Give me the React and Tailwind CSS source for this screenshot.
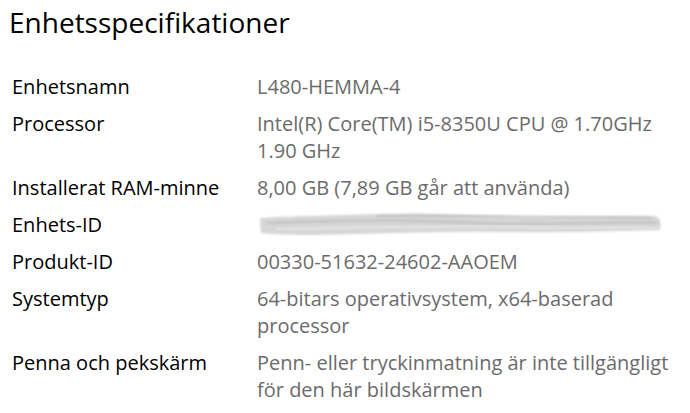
const SPECS = [
  { label: 'Enhetsnamn', lines: ['L480-HEMMA-4'] },
  { label: 'Processor', lines: ['Intel(R) Core(TM) i5-8350U CPU @ 1.70GHz', '1.90 GHz'] },
  { label: 'Installerat RAM-minne', lines: ['8,00 GB (7,89 GB går att använda)'] },
  { label: 'Enhets-ID', redacted: true },
  { label: 'Produkt-ID', lines: ['00330-51632-24602-AAOEM'] },
  { label: 'Systemtyp', lines: ['64-bitars operativsystem, x64-baserad', 'processor'] },
  { label: 'Penna och pekskärm', lines: ['Penn- eller tryckinmatning är inte tillgängligt', 'för den här bildskärmen'] },
];

// Smudged-out value, the way the screenshot hides the device id
function Redacted() {
  return (
    <svg width="410" height="27" viewBox="0 0 410 27" className="block">
      <defs>
        <filter id="smudge" x="-5%" y="-50%" width="110%" height="200%">
          <feGaussianBlur stdDeviation="1.2" />
        </filter>
      </defs>
      <path
        d="M3 7 C40 5 80 4 120 3 C170 1 220 5 280 6 C330 6 370 4 398 5 C404 6 404 14 403 19 C360 20 300 22 240 21 C180 20 120 23 60 24 C30 24 10 23 4 22 Z"
        fill="#d6d6d6"
        filter="url(#smudge)"
      />
      <path
        d="M10 12 C80 9 150 8 220 12 C290 15 350 10 400 12"
        stroke="#c4c4c4"
        strokeWidth="2.5"
        fill="none"
        filter="url(#smudge)"
      />
      <path
        d="M20 18 C90 17 170 15 250 16 C320 17 370 16 400 17"
        stroke="#e6e6e6"
        strokeWidth="2"
        fill="none"
        filter="url(#smudge)"
      />
      <path
        d="M120 5 C200 4 300 6 395 7"
        stroke="#bdbdbd"
        strokeWidth="1.5"
        fill="none"
        filter="url(#smudge)"
      />
    </svg>
  );
}

export default function App() {
  return (
    <div
      className="w-[690px] h-[413px] bg-white overflow-hidden"
      style={{ fontFamily: '"Open Sans", "Noto Sans", sans-serif' }}
    >
      <h1 className="pl-[9px] pt-[3px] text-[28px] leading-[38px] text-black">
        Enhetsspecifikationer
      </h1>

      <div className="grid grid-cols-[245px_1fr] gap-y-[10px] pl-[12px] mt-[32px]">
        {SPECS.map((row) => (
          <div key={row.label} className="contents">
            <div className="text-[20px] leading-[27px] text-black whitespace-nowrap">{row.label}</div>
            <div className="text-[20px] leading-[27px] text-[#6b6b6b]">
              {row.redacted ? (
                <Redacted />
              ) : (
                row.lines.map((line) => (
                  <div key={line} className="whitespace-nowrap">{line}</div>
                ))
              )}
            </div>
          </div>
        ))}
      </div>
    </div>
  );
}
